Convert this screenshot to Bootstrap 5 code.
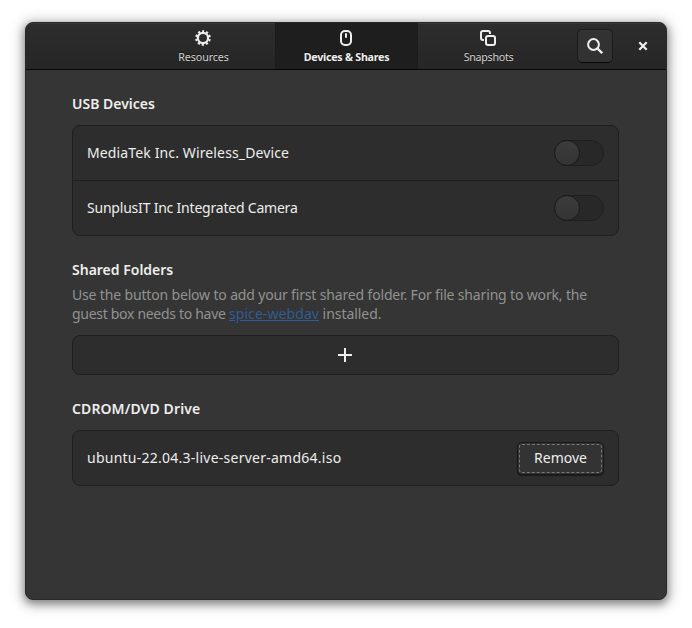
<!DOCTYPE html>
<html lang="en">
<head>
<meta charset="utf-8">
<meta name="viewport" content="width=device-width, initial-scale=1">
<title>Devices &amp; Shares</title>
<link rel="stylesheet" href="https://cdn.jsdelivr.net/npm/bootstrap@5.3.0/dist/css/bootstrap.min.css">
<style>
body{display:flow-root;min-height:100vh;background:#fff;font-family:"Noto Sans","Open Sans",sans-serif;font-size:14px;line-height:19px;color:#eeeeec;overflow:hidden}
.app-window{width:642px;height:578px;margin:22px 0 0 25px;background:#353535;border:1px solid #282828;border-radius:8px;box-shadow:0 3px 9px 1px rgba(0,0,0,.42),0 2px 14px 5px rgba(0,0,0,.13);overflow:hidden}
.titlebar{height:47px;background:linear-gradient(#2d2d2d,#262626);border-bottom:1px solid #070707;box-shadow:inset 0 1px #383838;padding-left:106px}
.view-tab.btn{display:block;width:143px;height:46px;padding:0;border:0;border-radius:0;background:none;color:#d2d2d0;font-size:10.7px;line-height:14px;text-shadow:0 -1px rgba(0,0,0,.6)}
.view-tab.btn:nth-child(3){width:141px}
.view-tab svg{display:block;margin:1px 0 4px 63px}
.view-tab:nth-child(3) svg{margin-left:62px}
.view-tab.btn.active{background:#1e1e1e;color:#eeeeec;font-weight:700;box-shadow:inset 1px 0 #1b1b1b,inset -1px 0 #1b1b1b}
.t1{letter-spacing:-.08px}.t2{letter-spacing:-.25px}.t3{letter-spacing:-.28px}
.search-btn{width:36px;height:34px;margin:6px 0 0 18px;padding:0;border:1px solid #1b1b1b;border-bottom-color:#070707;border-radius:5px;background:#323232;box-shadow:inset 0 1px rgba(255,255,255,.02)}
.close-btn{width:16px;height:16px;margin:15px 0 0 22px;padding:0;border:0;background:none}
.search-btn svg,.close-btn svg{display:block;margin:auto}
.page{padding:24px 47px 0 46px}
.group-title{font-size:14px;font-weight:600;line-height:19px;margin:0}
.group-title+.boxed{margin-top:12px}
.h-cd{letter-spacing:.1px}
.boxed{background:#2d2d2d;border:1px solid #1f1f1f;border-radius:8px;overflow:hidden}
.device{height:54px;padding:0 14px;background:none;border:0;color:inherit}
.device+.device{height:55px;border-top:1px solid #1f1f1f}
.device>span{margin-bottom:2px}
.d1{letter-spacing:.13px}.d2{letter-spacing:-.21px}.d3{letter-spacing:.25px}
.toggle{width:50px;height:26px;border:1px solid #1f1f1f;border-radius:13px;background:#282828;padding:0}
.toggle i{display:block;width:26px;height:26px;margin:-1px;border:1px solid #1a1a1a;border-radius:50%;background:linear-gradient(#3c3c3c,#343434)}
.hint{color:#929291;margin:6px 0 12px}
.hint a{color:#2f5c94;letter-spacing:.08px}
.l1{letter-spacing:-.16px}.l2{letter-spacing:-.3px}.l2 .tail{letter-spacing:-.05px}
.add-btn{height:40px}
.add-btn svg{margin-right:2px}
.remove-btn{width:87px;height:33px;padding:1px;border:1px solid #191919;border-radius:5px;background:#333;color:inherit;box-shadow:0 1px 1px rgba(0,0,0,.4)}
.remove-btn span{display:block;height:29px;line-height:25px;border:1px dashed #777776;border-radius:3px;font-size:14px}
</style>
<script src="https://cdn.jsdelivr.net/npm/bootstrap@5.3.0/dist/js/bootstrap.bundle.min.js"></script>
</head>
<body>
<main class="app-window">
  <header class="titlebar d-flex align-items-start">
    <button class="view-tab btn"><svg width="16" height="16" viewBox="0 0 16 16"><circle cx="8" cy="8" r="5.1" fill="none" stroke="#eeeeec" stroke-width="2.2"/><circle cx="8" cy="8" r="6.9" fill="none" stroke="#eeeeec" stroke-width="1.9" stroke-dasharray="2.3 2.035" stroke-dashoffset="1.15" transform="rotate(-90 8 8)"/></svg><span class="t1">Resources</span></button>
    <button class="view-tab btn active"><svg width="16" height="16" viewBox="0 0 16 16"><rect x="3" y="1" width="10" height="14" rx="4" fill="none" stroke="#eeeeec" stroke-width="2"/><path d="M8 4v3" stroke="#eeeeec" stroke-width="2" stroke-linecap="round"/></svg><span class="t2">Devices &amp; Shares</span></button>
    <button class="view-tab btn"><svg width="16" height="16" viewBox="0 0 16 16" fill="none" stroke="#eeeeec" stroke-width="2"><rect x="6" y="6" width="9" height="9" rx="2"/><path d="M4 10H3a2 2 0 0 1-2-2V3a2 2 0 0 1 2-2h5a2 2 0 0 1 2 2v1"/></svg><span class="t3">Snapshots</span></button>
    <button class="search-btn btn" aria-label="Search"><svg width="16" height="16" viewBox="0 0 16 16" fill="none" stroke="#eeeeec"><circle cx="6.5" cy="6.5" r="5.4" stroke-width="2"/><path d="M10.5 10.5l4.7 4.7" stroke-width="2.4"/></svg></button>
    <button class="close-btn btn" aria-label="Close"><svg width="16" height="16" viewBox="0 0 16 16"><path d="M4.3 4.3l7.4 7.4M11.7 4.3l-7.4 7.4" stroke="#eeeeec" stroke-width="2.2"/></svg></button>
  </header>
  <div class="page">
    <section>
      <h2 class="group-title">USB Devices</h2>
      <div class="boxed list-group">
        <div class="device list-group-item d-flex align-items-center justify-content-between"><span class="d1">MediaTek Inc. Wireless_Device</span><button class="toggle" role="switch" aria-checked="false" aria-label="MediaTek"><i></i></button></div>
        <div class="device list-group-item d-flex align-items-center justify-content-between"><span class="d2">SunplusIT Inc Integrated Camera</span><button class="toggle" role="switch" aria-checked="false" aria-label="SunplusIT"><i></i></button></div>
      </div>
    </section>
    <section class="mt-4">
      <h2 class="group-title">Shared Folders</h2>
      <p class="hint"><span class="l1">Use the button below to add your first shared folder. For file sharing to work, the</span><br><span class="l2">guest box needs to have <a href="#">spice-webdav</a><span class="tail"> installed.</span></span></p>
      <button class="boxed add-btn w-100 d-flex align-items-center justify-content-center p-0" aria-label="Add"><svg width="16" height="16" viewBox="0 0 16 16"><path d="M8 1v14M1 8h14" stroke="#eeeeec" stroke-width="2"/></svg></button>
    </section>
    <section class="mt-4">
      <h2 class="group-title"><span class="h-cd">CDROM/DVD Drive</span></h2>
      <div class="boxed"><div class="device d-flex align-items-center justify-content-between"><span class="d3">ubuntu-22.04.3-live-server-amd64.iso</span><button class="remove-btn"><span>Remove</span></button></div></div>
    </section>
  </div>
</main>
</body>
</html>
